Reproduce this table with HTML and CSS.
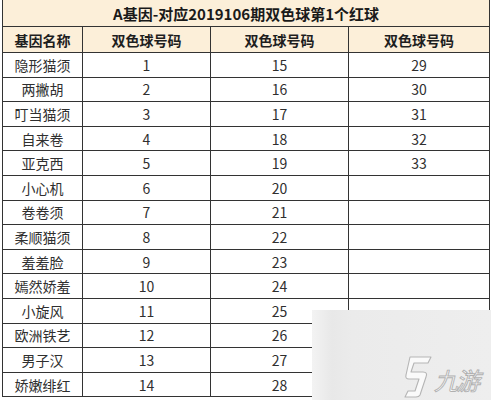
FILE: index.html
```html
<!DOCTYPE html>
<html lang="zh">
<head>
<meta charset="utf-8">
<link rel="stylesheet" href="styles.css">
</head>
<body>
<div class="page">
  <table class="gene-table">
    <colgroup>
      <col class="c1"><col class="c2"><col class="c3"><col class="c4">
    </colgroup>
    <thead>
      <tr class="title-row"><th colspan="4">A基因-对应2019106期双色球第1个红球</th></tr>
      <tr class="head-row"><th>基因名称</th><th>双色球号码</th><th>双色球号码</th><th>双色球号码</th></tr>
    </thead>
    <tbody>
      <tr><td>隐形猫须</td><td>1</td><td>15</td><td>29</td></tr>
      <tr><td>两撇胡</td><td>2</td><td>16</td><td>30</td></tr>
      <tr><td>叮当猫须</td><td>3</td><td>17</td><td>31</td></tr>
      <tr><td>自来卷</td><td>4</td><td>18</td><td>32</td></tr>
      <tr><td>亚克西</td><td>5</td><td>19</td><td>33</td></tr>
      <tr><td>小心机</td><td>6</td><td>20</td><td></td></tr>
      <tr><td>卷卷须</td><td>7</td><td>21</td><td></td></tr>
      <tr><td>柔顺猫须</td><td>8</td><td>22</td><td></td></tr>
      <tr><td>羞羞脸</td><td>9</td><td>23</td><td></td></tr>
      <tr><td>嫣然娇羞</td><td>10</td><td>24</td><td></td></tr>
      <tr><td>小旋风</td><td>11</td><td>25</td><td></td></tr>
      <tr><td>欧洲铁艺</td><td>12</td><td>26</td><td></td></tr>
      <tr><td>男子汉</td><td>13</td><td>27</td><td></td></tr>
      <tr><td>娇嫩绯红</td><td>14</td><td>28</td><td></td></tr>
    </tbody>
  </table>
  <div class="watermark">
    <svg class="wm-icon" viewBox="0 0 32 44" width="32" height="44">
      <path d="M9 2 L30 2 L27 8 L13 8 L10 17 L22 17 Q27 17 25 22 L19 40 Q18 42 15 42 L4 42 L7 36 L14 36 L18 24 L8 24 Q4 24 5 20 Z" fill="#fafafa" stroke="#b5b5b5" stroke-width="1.1" stroke-linejoin="round"/>
    </svg>
    <span class="wm-text">九游</span>
  </div>
</div>
</body>
</html>
```
FILE: styles.css
```css
html, body {
  margin: 0;
  padding: 0;
  background: #ffffff;
}
.page {
  position: relative;
  width: 491px;
  height: 400px;
  overflow: hidden;
  font-family: "Noto Sans CJK SC", "Microsoft YaHei", sans-serif;
}
.gene-table {
  margin: -1px 0 0 2px;
  width: 487px;
  border-collapse: collapse;
  table-layout: fixed;
}
.c1 { width: 80px; }
.c2 { width: 128px; }
.c3 { width: 138px; }
.c4 { width: 141px; }
.gene-table th,
.gene-table td {
  border: 1px solid #333333;
  padding: 0;
  text-align: center;
  vertical-align: middle;
  line-height: 1;
}
.title-row th {
  height: 26px;
  background: #fcefd9;
  font-size: 15px;
  font-weight: 700;
  color: #1a1a1a;
}
.head-row th {
  height: 25px;
  background: #fcefd9;
  font-size: 14px;
  font-weight: 700;
  color: #1e1e1e;
}
.gene-table td {
  height: 23.6px;
  font-size: 14px;
  color: #2f2f2f;
}
.watermark {
  position: absolute;
  left: 312px;
  top: 310px;
  width: 179px;
  height: 90px;
  background: linear-gradient(90deg, #f3f3f3 0px, #e8e8e8 20px, #ebebeb 40px, #eeeeee 100%);
}
.wm-icon {
  position: absolute;
  left: 89px;
  top: 45px;
}
.wm-text {
  position: absolute;
  left: 122px;
  top: 58px;
  font-size: 24px;
  font-style: italic;
  font-weight: 400;
  line-height: 1;
  color: #fafafa;
  -webkit-text-stroke: 0.9px #b0b0b0;
  letter-spacing: -2px;
}
```
